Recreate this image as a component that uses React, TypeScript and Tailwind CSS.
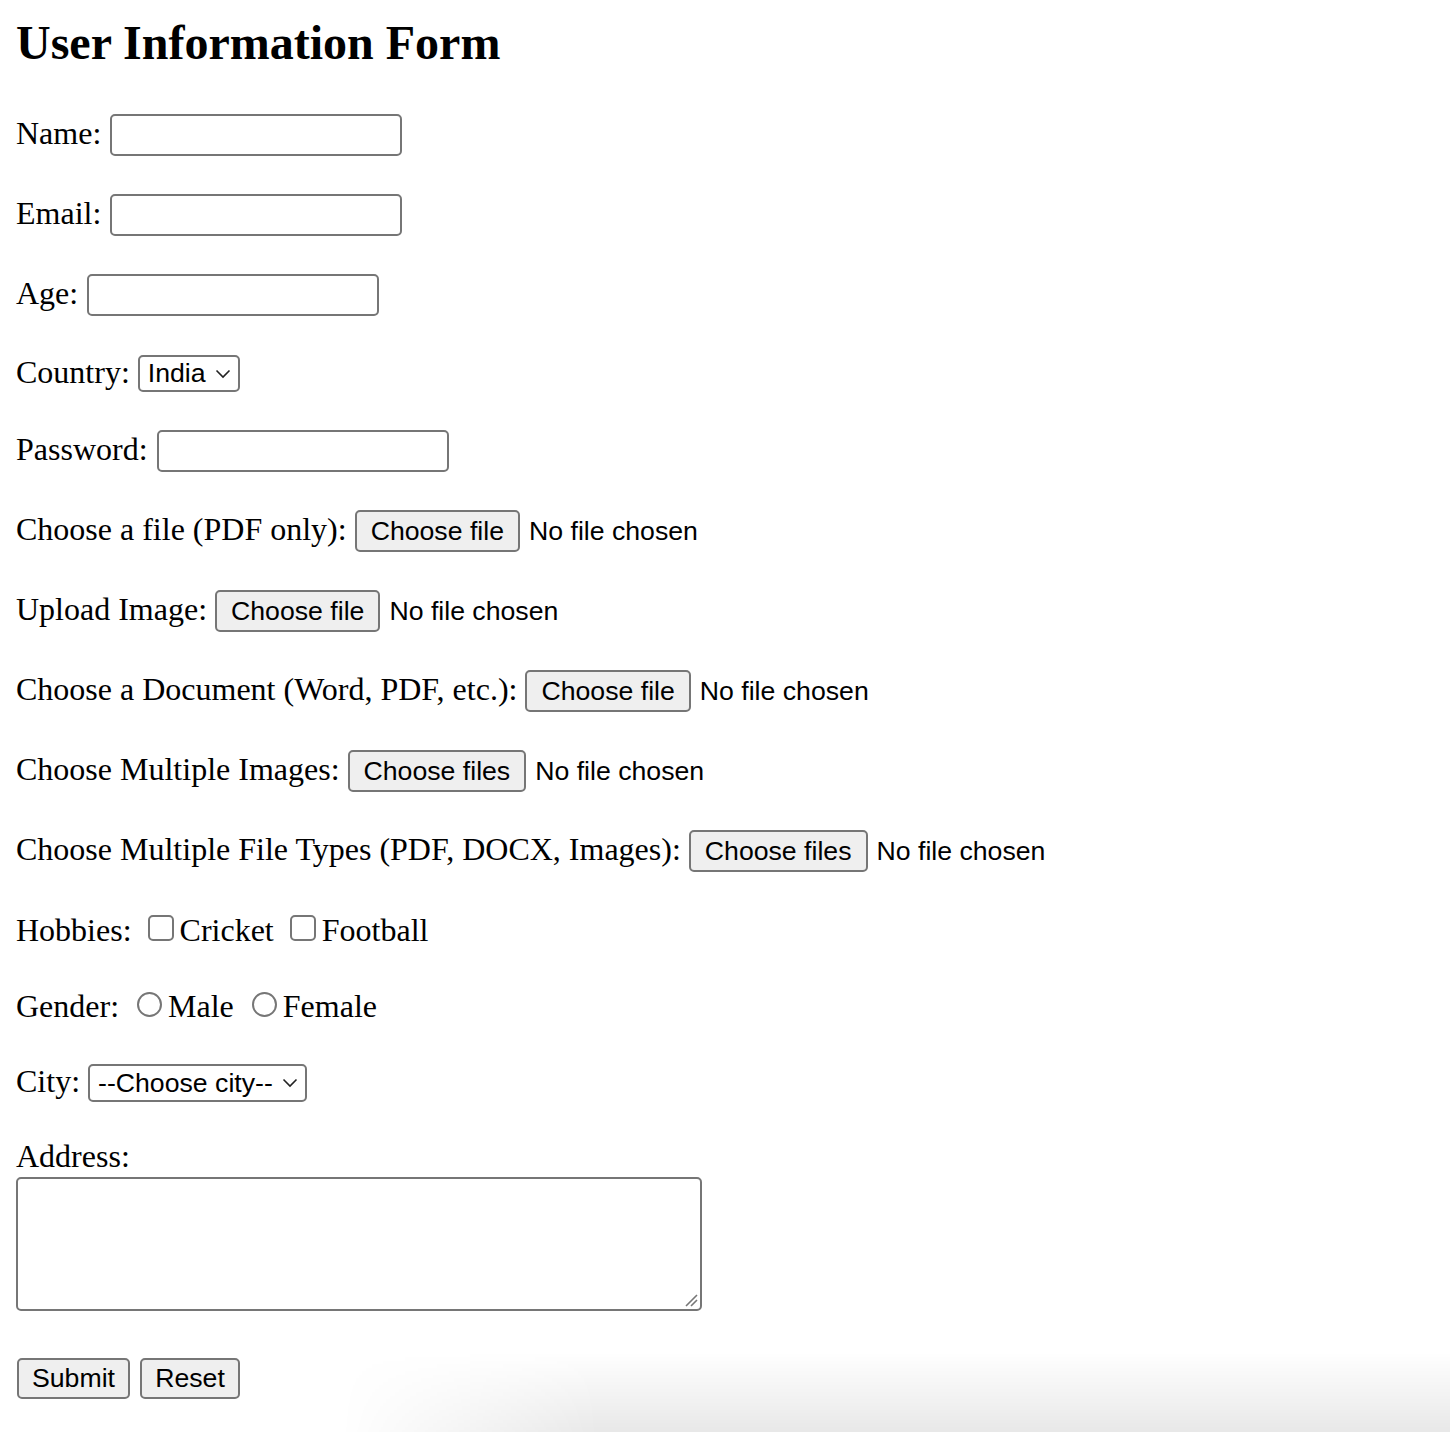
import React from "react";

const ctrl = "font-['Liberation_Sans',Arial,sans-serif] text-[26.67px] text-black";

function TextBox({ w = 292 }: { w?: number }) {
  return (
    <div
      className="ml-[9px] h-[42px] rounded-[5px] border-2 border-[#767676] bg-white"
      style={{ width: w }}
    />
  );
}

function FilePick({ label }: { label: string }) {
  return (
    <div className={`ml-[8px] flex items-center ${ctrl}`}>
      <div className="flex h-[42px] items-center rounded-[5px] border-2 border-[#767676] bg-[#efefef] px-[14px] leading-none">
        {label}
      </div>
      <span className="ml-[9px] leading-none">No file chosen</span>
    </div>
  );
}

function Chevron() {
  return (
    <svg width="16" height="10" viewBox="0 0 16 10" className="ml-[9px]">
      <path d="M1.5 1.5 L8 8 L14.5 1.5" fill="none" stroke="#222" strokeWidth="1.6" />
    </svg>
  );
}

function Select({ text, h }: { text: string; h: number }) {
  return (
    <div
      className={`ml-[8px] flex items-center rounded-[5px] border-2 border-[#767676] bg-white pl-[8px] pr-[7px] leading-none ${ctrl}`}
      style={{ height: h }}
    >
      {text}
      <Chevron />
    </div>
  );
}

function Check() {
  return <div className="mb-[4px] ml-[8px] mr-[6px] h-[26px] w-[26px] rounded-[5px] border-2 border-[#767676] bg-white" />;
}

function Radio() {
  return <div className="mb-[4px] ml-[10px] mr-[6px] h-[25px] w-[25px] rounded-full border-2 border-[#767676] bg-white" />;
}

function Label({ children, up = true }: { children: React.ReactNode; up?: boolean }) {
  return <span className={`${up ? "mb-[4px]" : ""} whitespace-pre leading-[36px]`}>{children}</span>;
}

export default function App() {
  const fileRows: [string, string][] = [
    ["Choose a file (PDF only):", "Choose file"],
    ["Upload Image:", "Choose file"],
    ["Choose a Document (Word, PDF, etc.):", "Choose file"],
    ["Choose Multiple Images:", "Choose files"],
    ["Choose Multiple File Types (PDF, DOCX, Images):", "Choose files"],
  ];

  return (
    <div className="relative min-h-[1432px] overflow-hidden bg-white pl-[16px] pt-[16px] font-['Liberation_Serif','Times_New_Roman',serif] text-[32px] text-black">
      <h2 className="text-[48px] font-bold leading-[54px]">User Information Form</h2>

      <form className="flex flex-col">
        <div className="mt-[44px] flex h-[42px] items-center">
          <Label>Name:</Label>
          <TextBox />
        </div>
        <div className="mt-[38px] flex h-[42px] items-center">
          <Label>Email:</Label>
          <TextBox />
        </div>
        <div className="mt-[38px] flex h-[42px] items-center">
          <Label>Age:</Label>
          <TextBox />
        </div>
        <div className="mt-[39px] flex h-[37px] items-center">
          <Label>Country:</Label>
          <Select text="India" h={37} />
        </div>
        <div className="mt-[38px] flex h-[42px] items-center">
          <Label>Password:</Label>
          <TextBox />
        </div>

        {fileRows.map(([label, btn]) => (
          <div key={label} className="mt-[38px] flex h-[42px] items-center">
            <Label>{label}</Label>
            <FilePick label={btn} />
          </div>
        ))}

        <div className="mt-[40px] flex h-[36px] items-center">
          <Label up={false}>Hobbies:</Label>
          <span className="w-[8px]" />
          <Check />
          <Label up={false}>Cricket</Label>
          <span className="w-[8px]" />
          <Check />
          <Label up={false}>Football</Label>
        </div>
        <div className="mt-[40px] flex h-[36px] items-center">
          <Label up={false}>Gender:</Label>
          <span className="w-[8px]" />
          <Radio />
          <Label up={false}>Male</Label>
          <span className="w-[8px]" />
          <Radio />
          <Label up={false}>Female</Label>
        </div>
        <div className="mt-[40px] flex h-[38px] items-center">
          <Label>City:</Label>
          <Select text="--Choose city--" h={38} />
        </div>

        <div className="mt-[36px] h-[36px] leading-[36px]">Address:</div>
        <div className="relative mt-[3px] h-[134px] w-[686px] rounded-[5px] border-2 border-[#767676] bg-white">
          <svg width="14" height="14" viewBox="0 0 14 14" className="absolute bottom-[2px] right-[2px]">
            <path d="M2 13 L13 2 M7 13 L13 7" stroke="#777" strokeWidth="1.6" />
          </svg>
        </div>

        <div className={`ml-[1px] mt-[47px] flex ${ctrl}`}>
          <div className="flex h-[41px] w-[113px] items-center justify-center rounded-[5px] border-2 border-[#767676] bg-[#efefef] leading-none">
            Submit
          </div>
          <div className="ml-[10px] flex h-[41px] w-[100px] items-center justify-center rounded-[5px] border-2 border-[#767676] bg-[#efefef] leading-none">
            Reset
          </div>
        </div>
      </form>

      <div className="pointer-events-none absolute bottom-0 left-[340px] right-0 h-[80px] bg-gradient-to-b from-transparent to-black/[0.09] [mask-image:linear-gradient(to_right,transparent,black_260px)]" />
    </div>
  );
}
